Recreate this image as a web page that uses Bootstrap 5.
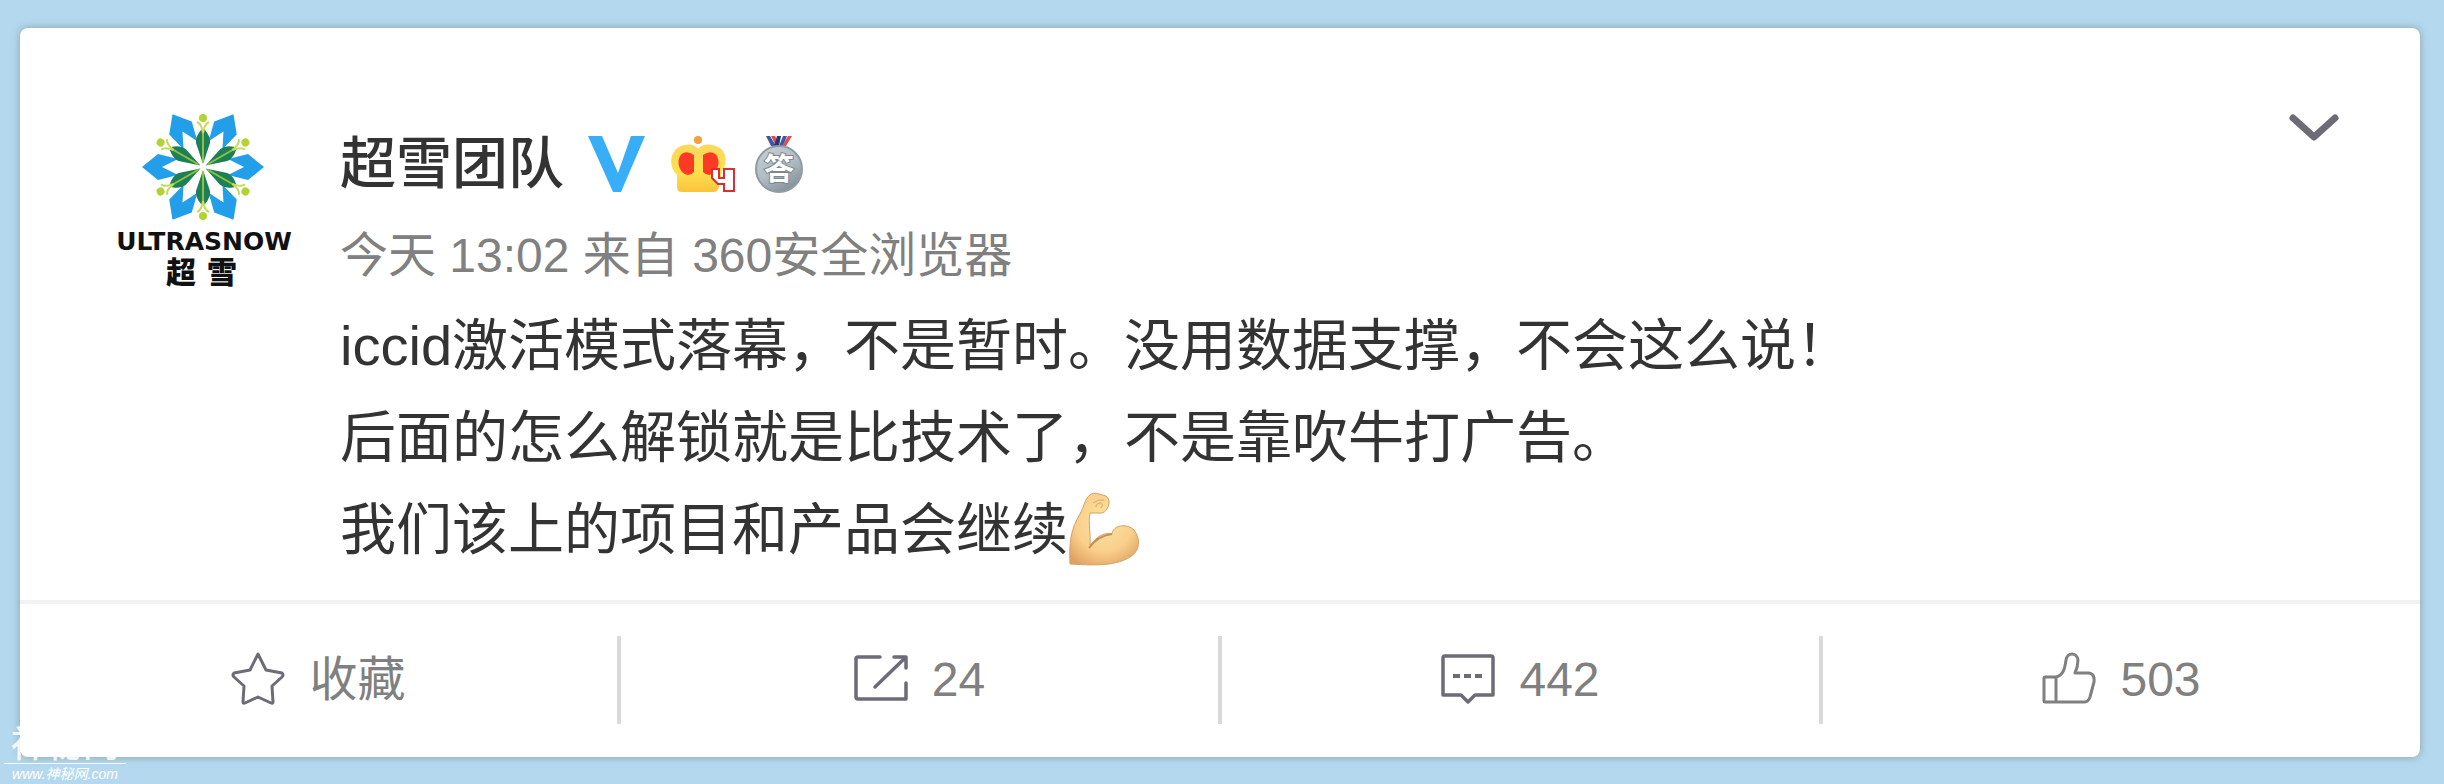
<!DOCTYPE html>
<html lang="zh-CN">
<head>
<meta charset="utf-8">
<meta name="viewport" content="width=device-width, initial-scale=1">
<title>超雪团队</title>
<link href="https://cdn.jsdelivr.net/npm/bootstrap@5.3.0/dist/css/bootstrap.min.css" rel="stylesheet">
<style>
  body { background: #b4d9ef; font-family: "Liberation Sans", "Noto Sans CJK SC", sans-serif; color: #333; }
  .feed { padding: 28px 24px 27px 20px; position: relative; }
  .post { border: 0; border-radius: 8px; box-shadow: 0 0 8px rgba(110, 120, 125, .6); }
  .post-body { padding: 67px 80px 24px; }
  .avatar { width: 210px; height: 210px; margin-right: 30px; }
  .post-content { padding-top: 29px; }
  .author { font-size: 56px; line-height: 80px; font-weight: 500; color: #333; margin-right: 24px; }
  .head-row { padding-bottom: 8px; }
  .meta { font-size: 48px; line-height: 88px; color: #808080; }
  .words { font-size: 56px; line-height: 92px; color: #333; }
  .emoji { width: 72px; height: 76px; vertical-align: -18px; }
  .actions { border-top: 4px solid #f2f2f2; padding: 32px 0 33px; }
  .action { height: 88px; border: 0; background: none; color: #808080; font-size: 48px; line-height: 72px; gap: 24px; padding: 0; width: 100%; }
  .action svg { margin-bottom: 4px; }
  .actions .col + .col { border-left: 4px solid #d9d9d9; }
  .more { background: none; border: 0; padding: 0; line-height: 1; margin: 16px 0 0; height: 34px; }
  .stamp { left: 4px; bottom: 0; width: 122px; color: #fff; }
  .stamp-name { font-size: 36px; line-height: 36px; font-weight: 500; border-bottom: 1px solid #fff; opacity: .85; }
  .stamp-url { font-size: 14px; line-height: 20px; }
</style>
</head>
<body>
<main class="feed">
  <article class="card post">
    <div class="post-body d-flex align-items-start">
      <a href="#" class="flex-shrink-0" aria-label="超雪团队">
        <svg class="avatar d-block" viewBox="0 0 210 210">
          <defs>
            <path id="blue" d="M61 0L45 -13L25 -8L41 0L25 8L45 13Z" fill="#229fe8"/>
            <g id="leaf"><path d="M3 0L24 -7Q30 -8 37 -2V2Q30 8 24 7Z" fill="#1c7f57"/><path d="M5 0H36" stroke="#8fc23c" stroke-width="2"/><path d="M45 -6Q43 -2 38 -1L34 0L38 1Q43 2 45 6" fill="none" stroke="#c3dc5a" stroke-width="2"/><circle cx="49" cy="0" r="4" fill="#b3d334"/></g>
          </defs>
          <g transform="translate(103 72)">
            <use href="#blue"/><use href="#blue" transform="rotate(60)"/><use href="#blue" transform="rotate(120)"/><use href="#blue" transform="rotate(180)"/><use href="#blue" transform="rotate(240)"/><use href="#blue" transform="rotate(300)"/>
            <use href="#leaf" transform="rotate(30)"/><use href="#leaf" transform="rotate(90)"/><use href="#leaf" transform="rotate(150)"/><use href="#leaf" transform="rotate(210)"/><use href="#leaf" transform="rotate(270)"/><use href="#leaf" transform="rotate(330)"/>
          </g>
          <text x="104" y="155" text-anchor="middle" font-family="DejaVu Sans" font-weight="700" font-size="25" fill="#111">ULTRASNOW</text>
          <g font-family="Noto Sans CJK SC" font-weight="900" font-size="30" fill="#111"><text x="66" y="188">超</text><text x="107" y="188">雪</text></g>
        </svg>
      </a>
      <div class="post-content flex-grow-1">
        <div class="head-row d-flex align-items-center">
          <a href="#" class="author text-decoration-none">超雪团队</a>
          <svg class="me-4" width="58" height="58" viewBox="0 0 58 58" role="img" aria-label="V"><path d="M0 1H14L30 38L43 1H57L33 57H25Z" fill="#37aef7"/></svg>
          <svg class="me-3" width="68" height="58" viewBox="0 0 68 58">
            <defs><linearGradient id="gold" x2="0" y2="1"><stop offset="0" stop-color="#fbd75c"/><stop offset=".6" stop-color="#fde04c"/><stop offset="1" stop-color="#fac33c"/></linearGradient></defs>
            <path d="M7 50V40C-3 31 0 12 15 10Q23 8 28 14Q33 8 42 10C56 12 59 26 52 36L49 52Q48 57 43 57H12Q7 57 7 52Z" fill="url(#gold)"/>
            <circle cx="28" cy="5" r="4" fill="#f4a03c"/>
            <path d="M24 20V37Q18 43 12 37Q6 29 10 21Q15 14 24 20ZM33 20V37Q39 43 45 37Q51 29 47 21Q42 14 33 20Z" fill="#fc3a25"/>
            <path d="M42 34H49V43H54V34H64V56H54V49H48L42 43Z" fill="#fff" stroke="#dc2d32" stroke-width="2"/>
          </svg>
          <svg width="50" height="58" viewBox="0 0 50 58">
            <defs><linearGradient id="silver" x2=".6" y2="1"><stop offset="0" stop-color="#c8d1d6"/><stop offset=".6" stop-color="#b0bbc3"/><stop offset="1" stop-color="#87939c"/></linearGradient></defs>
            <path d="M12 1H16L22 11H17Z" fill="#3b58a0"/><path d="M17 1H21L26 11H22Z" fill="#e34b4e"/><path d="M23 1H27L25 11H20Z" fill="#26387b"/><path d="M29 1H33L29 11H25Z" fill="#3b58a0"/><path d="M34 1H38L32 11H28Z" fill="#e34b4e"/>
            <circle cx="25" cy="34" r="23" fill="url(#silver)" stroke="#909ca5" stroke-width="2"/>
            <text x="25" y="44" text-anchor="middle" font-family="Noto Sans CJK SC" font-weight="700" font-size="30" fill="#fff" stroke="#7d8991" stroke-width="2" paint-order="stroke">答</text>
          </svg>
        </div>
        <div class="meta">今天 13:02 来自 360安全浏览器</div>
        <div class="words">iccid激活模式落幕，不是暂时。没用数据支撑，不会这么说！<br>后面的怎么解锁就是比技术了，不是靠吹牛打广告。<br>我们该上的项目和产品会继续<svg class="emoji" viewBox="0 0 72 76" role="img" aria-label="肌肉">
            <defs><radialGradient id="skin" cx=".5" cy=".4" r=".7"><stop offset="0" stop-color="#ffe3a3"/><stop offset=".6" stop-color="#f9cf8b"/><stop offset="1" stop-color="#e0a060"/></radialGradient></defs>
            <path d="M2 73C1 50 3 38 12 23C16 16 17 7 22 4Q25 1 31 3L38 5Q43 9 40 16Q37 23 31 22L22 22C20 34 23 43 22 54C29 46 35 41 44 43C45 34 59 32 66 39C73 48 72 60 62 66C49 74 32 75 2 73Z" fill="url(#skin)" stroke="#d6a065" stroke-width="1"/>
            <path d="M21 57Q29 45 44 43" fill="none" stroke="#c98d55" stroke-width="2"/>
            <path d="M25 12Q30 8 36 9M28 16Q28 12 33 12Q36 14 33 17" fill="none" stroke="#dca868" stroke-width="1"/>
          </svg></div>
      </div>
      <button type="button" class="more" aria-label="更多">
        <svg width="52" height="30" viewBox="0 0 52 30"><path d="M5 5L26 24L47 5" fill="none" stroke="#6c6b77" stroke-width="7" stroke-linecap="round" stroke-linejoin="round"/></svg>
      </button>
    </div>
    <div class="actions row g-0">
      <div class="col"><button type="button" class="action d-flex align-items-center justify-content-center">
        <svg width="54" height="54" viewBox="0 0 54 54"><path d="M27 3L35 19L51 22Q53 24 51 26L41 35L42 51Q42 53 40 52L27 46L14 52Q12 53 12 51L13 35L3 26Q1 24 3 22L19 19Z" fill="none" stroke="#6c6b77" stroke-width="3" stroke-linejoin="round"/></svg>
        <span>收藏</span></button></div>
      <div class="col"><button type="button" class="action d-flex align-items-center justify-content-center">
        <svg width="54" height="54" viewBox="0 0 54 54"><path d="M26 6H4Q2 6 2 8V46Q2 48 4 48H52V32M21 36L51 7M40 6H52V17" fill="none" stroke="#6c6b77" stroke-width="3.5" stroke-linecap="round" stroke-linejoin="round"/></svg>
        <span>24</span></button></div>
      <div class="col"><button type="button" class="action d-flex align-items-center justify-content-center">
        <svg width="54" height="54" viewBox="0 0 54 54"><path d="M4 5H50Q52 5 52 7V44H34L27 51L20 44H2V7Q2 5 4 5Z" fill="none" stroke="#6c6b77" stroke-width="3.5" stroke-linejoin="round"/><path d="M12 25H19M23 25H30M34 25H41" stroke="#6c6b77" stroke-width="4"/></svg>
        <span>442</span></button></div>
      <div class="col"><button type="button" class="action d-flex align-items-center justify-content-center">
        <svg width="54" height="54" viewBox="0 0 54 54"><path d="M14 26V51M2 27Q2 26 3 26H14C22 24 23 16 24 9C25 1 35 1 36 9Q36 16 33 22H47Q53 23 52 31L48 46Q46 51 43 51H3Q2 51 2 50Z" fill="none" stroke="#808080" stroke-width="3" stroke-linejoin="round"/></svg>
        <span>503</span></button></div>
    </div>
  </article>
  <div class="stamp position-absolute text-center">
    <div class="stamp-name">神秘网</div>
    <div class="stamp-url fst-italic">www.神秘网.com</div>
  </div>
</main>
<script src="https://cdn.jsdelivr.net/npm/bootstrap@5.3.0/dist/js/bootstrap.bundle.min.js"></script>
</body>
</html>
